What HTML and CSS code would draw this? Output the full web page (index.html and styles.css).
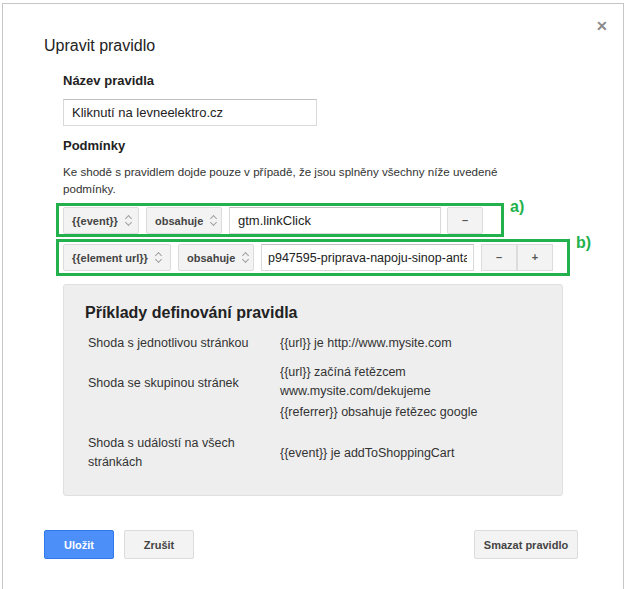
FILE: index.html
```html
<!DOCTYPE html>
<html lang="cs">
<head>
    <meta charset="UTF-8">
    <title>Upravit pravidlo</title>
    <link rel="stylesheet" href="styles.css">
</head>
<body>
    <div class="dialog">
        <span class="close">&#x2715;</span>
        <h1 class="title">Upravit pravidlo</h1>

        <div class="content">
            <h3 class="label">Název pravidla</h3>
            <input class="textbox name-box" type="text" value="Kliknutí na levneelektro.cz" readonly>

            <h3 class="label">Podmínky</h3>
            <p class="desc">Ke shodě s pravidlem dojde pouze v případě, že jsou splněny všechny níže uvedené podmínky.</p>

            <div class="cond-wrap">
                <div class="cond cond-a">
                    <div class="select sel-var">{{event}} <span class="arrows"></span></div>
                    <div class="select sel-op">obsahuje <span class="arrows"></span></div>
                    <input class="textbox val-a" type="text" value="gtm.linkClick" readonly>
                    <div class="btn-small">&ndash;</div>
                </div>
                <span class="mark mark-a">a)</span>
            </div>

            <div class="cond-wrap">
                <div class="cond cond-b">
                    <div class="select sel-var-b">{{element url}} <span class="arrows"></span></div>
                    <div class="select sel-op">obsahuje <span class="arrows"></span></div>
                    <input class="textbox val-b" type="text" value="p947595-priprava-napoju-sinop-antarctica" readonly>
                    <div class="btn-group">
                        <div class="btn-small">&ndash;</div>
                        <div class="btn-small">+</div>
                    </div>
                </div>
                <span class="mark mark-b">b)</span>
            </div>

            <div class="examples">
                <h2>Příklady definování pravidla</h2>
                <div class="ex-row">
                    <div class="ex-left">Shoda s jednotlivou stránkou</div>
                    <div class="ex-right">{{url}} je http://www.mysite.com</div>
                </div>
                <div class="ex-row ex-top">
                    <div class="ex-left">Shoda se skupinou stránek</div>
                    <div class="ex-right">
                        <div>{{url}} začíná řetězcem<br>www.mysite.com/dekujeme</div>
                        <div class="ex-sub">{{referrer}} obsahuje řetězec google</div>
                    </div>
                </div>
                <div class="ex-row">
                    <div class="ex-left">Shoda s událostí na všech stránkách</div>
                    <div class="ex-right">{{event}} je addToShoppingCart</div>
                </div>
            </div>
        </div>

        <div class="footer">
            <button class="btn btn-blue">Uložit</button>
            <button class="btn">Zrušit</button>
            <button class="btn btn-right">Smazat pravidlo</button>
        </div>
    </div>
</body>
</html>
```

FILE: styles.css
```css
html, body {
    margin: 0;
    padding: 0;
    background: #fff;
}
body {
    font-family: "Liberation Sans", Arial, sans-serif;
    font-size: 12px;
    color: #222;
    overflow: hidden;
    height: 589px;
}
.dialog {
    position: relative;
    margin: 3px 0 0 2px;
    width: 622px;
    height: 620px;
    border: 1px solid #c6c6c6;
    box-sizing: border-box;
    padding: 30px 0 0 41px;
}
.close {
    position: absolute;
    top: 14px;
    right: 15px;
    font-size: 14px;
    color: #8a8a8a;
    font-weight: bold;
}
.title {
    margin: 0;
    font-size: 16px;
    font-weight: normal;
    line-height: 24px;
    color: #222;
}
.content {
    padding-left: 19px;
    margin-top: 14px;
}
.label {
    margin: 0;
    font-size: 13px;
    font-weight: bold;
    line-height: 18px;
    color: #222;
}
.textbox {
    display: block;
    border: 1px solid #d9d9d9;
    border-top-color: #c0c0c0;
    background: #fff;
    height: 27px;
    line-height: 25px;
    padding: 0 8px;
    box-sizing: border-box;
    font-family: "Liberation Sans", Arial, sans-serif;
    font-size: 13px;
    color: #222;
    outline: none;
    border-radius: 0;
}
.name-box {
    width: 254px;
    margin: 9px 0 11px;
}
.desc {
    margin: 8px 0 6px;
    font-size: 11.6px;
    line-height: 17px;
    color: #333;
    width: 460px;
}
.cond-wrap {
    display: flex;
    align-items: flex-start;
    margin-left: -7px;
}
.cond {
    display: flex;
    align-items: center;
    gap: 7px;
    border: 3px solid #22b14c;
    padding: 1px 4px 0;
    height: 34px;
    box-sizing: border-box;
}
.cond-a {
    width: 448px;
}
.cond-b {
    width: 514px;
    height: 37px;
    margin-top: 2px;
    padding-top: 0;
}
.select {
    height: 27px;
    box-sizing: border-box;
    background: #f3f3f3;
    border: 1px solid #dcdcdc;
    border-radius: 2px;
    font-size: 11px;
    font-weight: bold;
    color: #444;
    padding: 0 4px 0 8px;
    display: flex;
    align-items: center;
    gap: 6px;
    white-space: nowrap;
}
.arrows {
    display: inline-block;
    width: 9px;
    height: 13px;
    position: relative;
}
.arrows::before,
.arrows::after {
    content: "";
    position: absolute;
    left: 2px;
    width: 4px;
    height: 4px;
    border: solid #a0a0a0;
    border-width: 1px 0 0 1px;
}
.arrows::before {
    top: 2px;
    transform: rotate(45deg);
}
.arrows::after {
    bottom: 2px;
    transform: rotate(225deg);
}
.sel-var { width: 76px; }
.sel-var-b { width: 108px; }
.sel-op { width: 76px; }
.val-a {
    width: 212px;
}
.val-b {
    width: 213px;
    padding: 0 6px;
    font-size: 12.5px;
}
.cond-a .btn-small {
    margin-left: -1px;
}
.btn-group {
    display: flex;
}
.btn-small {
    width: 36px;
    height: 27px;
    box-sizing: border-box;
    background: #f3f3f3;
    border: 1px solid #dcdcdc;
    border-radius: 2px;
    text-align: center;
    line-height: 25px;
    font-size: 11px;
    font-weight: bold;
    color: #555;
}
.btn-group .btn-small {
    border-radius: 0;
}
.mark {
    color: #22b14c;
    font-weight: bold;
    font-size: 16px;
    line-height: 16px;
    margin-left: 6px;
    margin-top: -4px;
}
.mark-b {
    margin-top: -2px;
}
.examples {
    margin-top: 8px;
    width: 500px;
    height: 212px;
    box-sizing: border-box;
    background: #eeeeee;
    border: 1px solid #e0e0e0;
    border-radius: 3px;
    padding: 17px 20px 0 21px;
}
.examples h2 {
    margin: 0 0 10px;
    font-size: 16px;
    font-weight: bold;
    line-height: 22px;
    color: #222;
}
.ex-row {
    display: grid;
    grid-template-columns: 192px 1fr;
    align-items: center;
    margin-bottom: 10px;
    color: #333;
    font-size: 12.5px;
    line-height: 19px;
    padding-left: 3px;
}
.ex-top {
    align-items: start;
    margin-bottom: 12px;
}
.ex-top .ex-left {
    padding-top: 11px;
}
.ex-left {
    width: 180px;
}
.ex-sub {
    margin-top: 2px;
}
.footer {
    display: flex;
    gap: 10px;
    margin-top: 34px;
    width: 534px;
}
.btn {
    height: 29px;
    min-width: 70px;
    padding: 0 8px;
    box-sizing: border-box;
    border: 1px solid #dcdcdc;
    border-radius: 2px;
    background: #f3f3f3;
    font-family: "Liberation Sans", Arial, sans-serif;
    font-size: 11px;
    font-weight: bold;
    color: #444;
    white-space: nowrap;
}
.btn-blue {
    background: #4d8ff9;
    border-color: #3079ed;
    color: #fff;
}
.btn-right {
    margin-left: auto;
    width: 104px;
}
```
